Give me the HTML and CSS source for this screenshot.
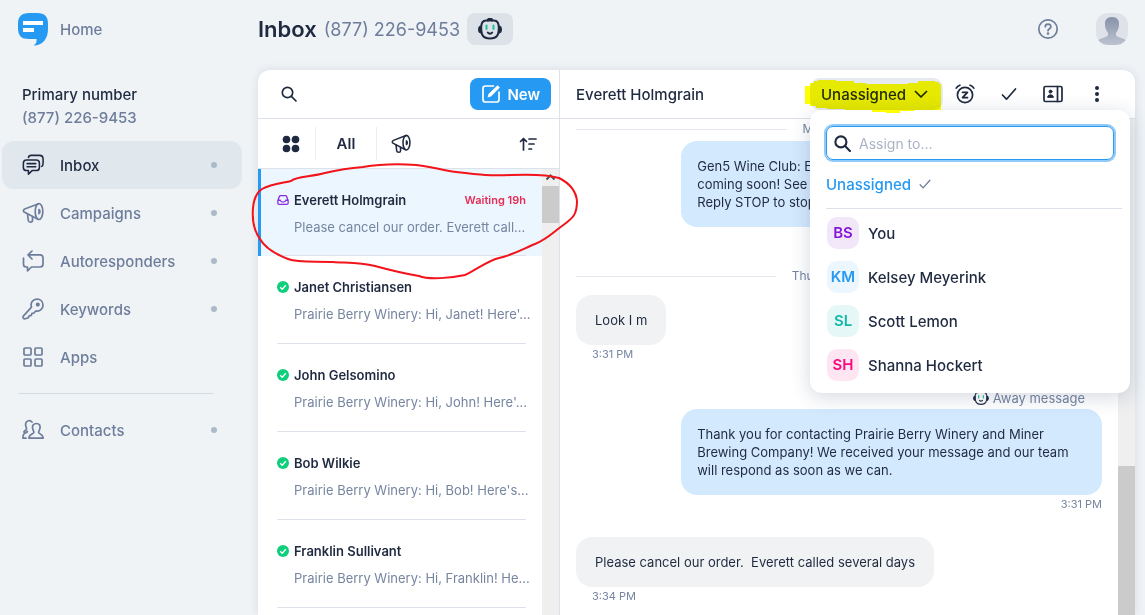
FILE: index.html
```html
<!DOCTYPE html>
<html lang="en">
<head>
  <meta charset="UTF-8">
  <meta name="viewport" content="width=device-width, initial-scale=1.0">
  <title>Inbox</title>
  <link rel="stylesheet" href="styles.css">
</head>
<body>
  <svg class="sprite" aria-hidden="true">
    <symbol id="megaphone" viewBox="0 0 22 22">
      <path d="M16.500 1.700 2.700 7C1 7.800 1 9.600 2.600 10.300L16 17.300"/>
      <ellipse cx="17" cy="9.500" rx="3.800" ry="8"/>
      <path d="M17 7.500c1.200.6 1.200 3.400 0 4z" fill="currentColor"/>
      <path d="M5.500 12l.8 6.500c.3 2.200 4.200 2.200 4.200-.2v-3.500"/>
    </symbol>
    <symbol id="robot" viewBox="0 0 24 22">
      <path d="M9.800 2.500c0-2.500 4.400-2.500 4.400 0" fill="currentColor"/>
      <path d="M8 2.500h8c3.500 0 4.800 2.200 4.800 7 0 7-1.300 11-8.800 11s-8.800-4-8.800-11c0-4.800 1.300-7 4.800-7z"/>
      <path d="M2.800 8.500c-2.400.5-2.400 5.500 0 6zM21.200 8.500c2.400.5 2.400 5.500 0 6z" fill="currentColor"/>
      <path d="M8.500 7.500v3.500M15.500 7.500v3.500" class="robot-eye"/>
      <path d="M9.800 14.500c1.200 1.600 3.200 1.600 4.400 0"/>
    </symbol>
    <symbol id="search" viewBox="0 0 16 16">
      <circle cx="6.500" cy="6.500" r="5.200"/>
      <path d="M10.400 10.400l4.600 4.600"/>
    </symbol>
    <symbol id="check" viewBox="0 0 16 16">
      <path d="M1.500 9l4 4.200L14.500 3"/>
    </symbol>
    <symbol id="done" viewBox="0 0 12 12">
      <circle cx="6" cy="6" r="6" fill="#0fce7c" stroke="none"/>
      <path d="M3.200 6.200l2 2 3.600-3.900" stroke="#fff" stroke-width="1.300"/>
    </symbol>
  </svg>

  <div class="app">
    <aside class="sidebar">
      <a href="#" class="home">
        <svg class="logo" viewBox="0 0 30 33" aria-hidden="true">
          <path d="M11 0h8c8 0 11 3.500 11 11v5c0 9-5 16.500-14.500 16.500 2.500-1.500 3.500-3.500 3-6.500H11C3.500 26 0 23 0 15v-4C0 3.500 3.500 0 11 0z" fill="#2699f2"/>
          <path d="M5 8h20v4H5zM5 15h11v4H5z" fill="#fff"/>
        </svg>
        <span>Home</span>
      </a>

      <div class="account">
        <strong>Primary number</strong>
        <span>(877) 226-9453</span>
      </div>

      <nav class="nav">
        <a href="#" class="nav-item active">
          <svg class="icon" viewBox="0 0 24 24">
            <path d="M5 6.600h10.500c2.200 0 3.500 1 3.500 3.500v4.500c0 2.500-1.300 3.500-3.500 3.500H11l-4 4v-4H5c-2.200 0-3.500-1-3.500-3.500v-4.500c0-2.500 1.300-3.500 3.500-3.500z"/>
            <path d="M7 3.800C7.300 2.300 8.300 1.500 10 1.500h9c3 0 4 1.300 4 4V10c0 2-.5 3-1.500 3.500M5.500 10.500h9.500M5.500 14h9.500"/>
          </svg>
          <span>Inbox</span><i class="dot"></i>
        </a>
        <a href="#" class="nav-item">
          <svg class="icon"><use href="#megaphone"/></svg>
          <span>Campaigns</span><i class="dot"></i>
        </a>
        <a href="#" class="nav-item">
          <svg class="icon" viewBox="0 0 22 22">
            <path d="M1.500 8v6c0 2 1 3 2.500 3h1.500v3.800l4-3.800H18c2 0 3-1 3-3V7.800c0-2-1-3-3-3H6M10 1 6 4.800 10 9"/>
          </svg>
          <span>Autoresponders</span><i class="dot"></i>
        </a>
        <a href="#" class="nav-item">
          <svg class="icon" viewBox="0 0 22 22">
            <path d="M9.500 9.200C8 4.500 11 1.200 15 1.200c3.500 0 6 2.500 6 6s-3 6.600-7.300 5.800L12 15l-2 .3-.6 2-2 .4L6 20l-3.500.8c-1.500 0-2-1.800-1-3z"/>
            <circle cx="15.800" cy="6.600" r="1.200" fill="currentColor"/>
          </svg>
          <span>Keywords</span><i class="dot"></i>
        </a>
        <a href="#" class="nav-item">
          <svg class="icon" viewBox="0 0 22 22">
            <rect x="2" y="2" width="7" height="7" rx="1"/>
            <rect x="13" y="2" width="7" height="7" rx="1"/>
            <rect x="2" y="13" width="7" height="7" rx="1"/>
            <rect x="13" y="13" width="7" height="7" rx="1"/>
          </svg>
          <span>Apps</span>
        </a>
        <hr>
        <a href="#" class="nav-item">
          <svg class="icon" viewBox="0 0 22 22">
            <path d="M14.500 4.500c-3 0-4.300 2-3.900 4.600.4 2.300 1.400 3 1.200 4.600-.2 1.300-4.800 1-4.800 5.500h14.200c0-4.500-4.400-4.200-4.600-5.500-.2-1.600 1-2.300 1.400-4.600.4-2.600-.8-4.600-3.500-4.600z"/>
            <path d="M10 3C8.600 1.200 4.200.8 3.600 5c-.3 2.300 1 3.300.9 4.800-.2 1.500-2 2-2.600 3.200M4 19.200H.9c0-2 .2-3.200 1-4.200 1.300-1.300 3-1.500 3.500-2.500"/>
          </svg>
          <span>Contacts</span><i class="dot"></i>
        </a>
      </nav>
    </aside>

    <main class="main">
      <header class="topbar">
        <h1>Inbox</h1>
        <span class="number">(877) 226-9453</span>
        <button class="bot-button" aria-label="Autoresponder">
          <svg class="icon icon-robot"><use href="#robot"/></svg>
        </button>
        <button class="help" aria-label="Help">
          <svg class="icon" viewBox="0 0 22 22">
            <circle cx="11" cy="11" r="9.200"/>
            <path d="M8.300 8.700c0-3.500 5.600-3.500 5.600 0 0 2-2.900 2-2.900 4"/>
            <circle cx="11" cy="15.600" r=".5" fill="currentColor"/>
          </svg>
        </button>
        <button class="profile" aria-label="Profile">
          <svg viewBox="0 0 32 32">
            <defs>
              <linearGradient id="person" x1="0" y1="0" x2="0" y2="1">
                <stop offset="0" stop-color="#8791a7"/>
                <stop offset="1" stop-color="#bcc4d1"/>
              </linearGradient>
            </defs>
            <path d="M16 4c5 0 7.500 3 7 8-.2 4-1.700 6-3 8-.6 2.500 1.200 3.700 3.800 4.600 2.700.9 4.800 1.600 6.200 2.900-2.200 3-5 4.500-9 4.500H11c-4 0-6.800-1.500-9-4.500 1.400-1.300 3.500-2 6.200-2.900 2.600-.9 4.400-2.100 3.800-4.600-1.300-2-2.800-4-3-8-.5-5 2-8 7-8z" fill="url(#person)"/>
          </svg>
        </button>
      </header>

      <div class="panel">
        <section class="conversations">
          <div class="list-bar">
            <button class="bare" aria-label="Search">
              <svg class="icon icon-small"><use href="#search"/></svg>
            </button>
            <button class="new-button">
              <svg class="icon icon-compose" viewBox="0 0 20 20">
                <path d="M12.500 2H4.500C2.500 2 2 2.500 2 4.500v11c0 2 .5 2.500 2.500 2.500h11c2 0 2.500-.5 2.500-2.500V8"/>
                <path d="M6.500 13.500l1-3.500L16.500 1.200l2.400 2.300L10 12.500z" fill="currentColor" stroke="none"/>
              </svg>
              New
            </button>
          </div>
          <div class="filters">
            <button class="bare filter" aria-label="All channels">
              <svg class="icon icon-dots" viewBox="0 0 18 18">
                <circle cx="4.500" cy="4.500" r="3.800"/><circle cx="13.500" cy="4.500" r="3.800"/>
                <circle cx="4.500" cy="13.500" r="3.800"/><circle cx="13.500" cy="13.500" r="3.800"/>
              </svg>
            </button>
            <button class="bare filter">All</button>
            <button class="bare filter" aria-label="Campaigns">
              <svg class="icon icon-filter"><use href="#megaphone"/></svg>
            </button>
            <button class="bare sort" aria-label="Sort">
              <svg class="icon icon-sort" viewBox="0 0 18 14">
                <path d="M4.500 13V1.500M1.500 4.500l3-3 3 3M10 2h7M10 7h5M10 12h2.500"/>
              </svg>
            </button>
          </div>
          <div class="scroller">
            <ul class="threads">
              <li class="thread selected">
                <a href="#">
                  <svg class="status" viewBox="0 0 14 12">
                    <path d="M1 6.500 2.800 2C3 1.300 3.400 1 4.200 1h5.600c.8 0 1.200.3 1.400 1L13 6.500v3c0 1-.5 1.500-1.500 1.500h-9C1.500 11 1 10.500 1 9.500zM1.200 6.300h2.600c.5 2.800 5.900 2.800 6.400 0h2.600"/>
                  </svg>
                  <strong>Everett Holmgrain</strong>
                  <em>Waiting 19h</em>
                  <p>Please cancel our order. Everett call...</p>
                </a>
              </li>
              <li class="thread">
                <a href="#">
                  <svg class="status"><use href="#done"/></svg>
                  <strong>Janet Christiansen</strong>
                  <p>Prairie Berry Winery: Hi, Janet! Here'...</p>
                </a>
              </li>
              <li class="thread">
                <a href="#">
                  <svg class="status"><use href="#done"/></svg>
                  <strong>John Gelsomino</strong>
                  <p>Prairie Berry Winery: Hi, John! Here'...</p>
                </a>
              </li>
              <li class="thread">
                <a href="#">
                  <svg class="status"><use href="#done"/></svg>
                  <strong>Bob Wilkie</strong>
                  <p>Prairie Berry Winery: Hi, Bob! Here's...</p>
                </a>
              </li>
              <li class="thread">
                <a href="#">
                  <svg class="status"><use href="#done"/></svg>
                  <strong>Franklin Sullivant</strong>
                  <p>Prairie Berry Winery: Hi, Franklin! He...</p>
                </a>
              </li>
            </ul>
            <div class="scrollbar list-scrollbar">
              <svg class="scroll-arrow" viewBox="0 0 17 17"><path d="M4.500 10.500l4-4 4 4"/></svg>
              <div class="thumb"></div>
            </div>
          </div>
        </section>

        <section class="chat">
          <div class="chat-bar">
            <h2>Everett Holmgrain</h2>
            <div class="assign">
              <button class="assign-button">
                Unassigned
                <svg class="icon icon-chevron" viewBox="0 0 14 8"><path d="M1.500 1.500 7 7l5.500-5.500"/></svg>
              </button>
              <svg class="marker" viewBox="0 0 136 33" aria-hidden="true">
                <path d="M0 6h5V3h4V1h4V0h18v1h18v2h12v1h42V3h10V1h17v1h4v2h2v26h-27v1h-14v2H81v-1H67v-2H40v-1H22v-1H11v-2H5v-2H0z"/>
              </svg>
              <div class="assign-menu">
                <label class="assign-search">
                  <svg class="icon icon-search"><use href="#search"/></svg>
                  <input type="text" placeholder="Assign to..." aria-label="Assign to">
                </label>
                <button class="bare current">
                  Unassigned
                  <svg class="icon icon-tick"><use href="#check"/></svg>
                </button>
                <ul class="people">
                  <li><button class="bare person"><span class="initials purple">BS</span>You</button></li>
                  <li><button class="bare person"><span class="initials blue">KM</span>Kelsey Meyerink</button></li>
                  <li><button class="bare person"><span class="initials teal">SL</span>Scott Lemon</button></li>
                  <li><button class="bare person"><span class="initials pink">SH</span>Shanna Hockert</button></li>
                </ul>
              </div>
            </div>
            <button class="bare action" aria-label="Snooze">
              <svg class="icon icon-action" viewBox="0 0 20 20">
                <circle cx="10" cy="11" r="7.600"/>
                <path d="M1.200 4.200C2 2.800 3.200 1.800 4.900 1.200M18.800 4.200C18 2.800 16.800 1.800 15.100 1.200M7.500 8.300h5l-5 5.400h5"/>
              </svg>
            </button>
            <button class="bare action" aria-label="Resolve">
              <svg class="icon icon-small"><use href="#check"/></svg>
            </button>
            <button class="bare action" aria-label="Contact details">
              <svg class="icon icon-action" viewBox="0 0 20 20">
                <rect x="1" y="2.500" width="18" height="15" rx="1.500"/>
                <path d="M14.500 2.500v15"/>
                <circle cx="7.500" cy="7.600" r="1.500" fill="currentColor" stroke-width="1"/>
                <path d="M4.600 13c0-3 5.800-3 5.800 0z" fill="currentColor" stroke-width="1"/>
              </svg>
            </button>
            <button class="bare action" aria-label="More">
              <svg class="icon icon-more" viewBox="0 0 4 16">
                <circle cx="2" cy="2" r="2"/><circle cx="2" cy="8" r="2"/><circle cx="2" cy="14" r="2"/>
              </svg>
            </button>
          </div>

          <div class="scroller">
            <div class="messages">
              <div class="day first-day">Mon, Aug 24</div>
              <p class="bubble sent">Gen5 Wine Club: E<br>coming soon! See<br>Reply STOP to stop</p>
              <div class="day">Thursday, Jul 23</div>
              <p class="bubble">Look I m</p>
              <time class="time">3:31 PM</time>
              <div class="away"><svg class="icon icon-away"><use href="#robot"/></svg>Away message</div>
              <p class="bubble sent">Thank you for contacting Prairie Berry Winery and Miner<br>Brewing Company! We received your message and our team<br>will respond as soon as we can.</p>
              <time class="time sent-time">3:31 PM</time>
              <p class="bubble">Please cancel our order.&nbsp; Everett called several days</p>
              <time class="time">3:34 PM</time>
            </div>
            <div class="scrollbar chat-scrollbar">
              <div class="thumb"></div>
            </div>
          </div>
        </section>

        <svg class="loop" viewBox="0 0 328 118" aria-hidden="true">
          <path d="M11 26C20 21 32 20 40 18C45 13 60 14 74 10C90 6 98 5 112 4C130 1 150 1 165 2C178 3 190 7 205 9C230 12 240 13 260 12C285 11 298 12 308 15C320 21 325 28 326 38C326 52 322 55 311 63C300 71 296 76 284 81C272 86 262 92 248 95C236 98 225 107 214 112C200 115 178 117 168 113C150 110 135 106 124 103C108 99 95 100 82 99C65 98 48 100 37 96C24 91 14 85 9 76C2 66 1 56 2 45C3 35 6 29 11 26"/>
        </svg>
      </div>
    </main>
  </div>
</body>
</html>
```
FILE: styles.css
```css
* {
  box-sizing: border-box;
}

body {
  margin: 0;
  background: #eff3f6;
  color: #1f2a40;
  font-family: Inter, "Liberation Sans", sans-serif;
  font-size: 15px;
}

h1, h2, p, ul {
  margin: 0;
  padding: 0;
}

ul {
  list-style: none;
}

a {
  color: inherit;
  text-decoration: none;
}

button {
  font: inherit;
  color: inherit;
  border: none;
  padding: 0;
  cursor: pointer;
}

.bare {
  display: flex;
  align-items: center;
  background: none;
}

.sprite {
  position: absolute;
  width: 0;
  height: 0;
}

.icon {
  flex: none;
  width: 22px;
  height: 22px;
  fill: none;
  stroke: currentColor;
  stroke-width: 1.7;
  stroke-linecap: round;
  stroke-linejoin: round;
}

.app {
  display: flex;
  height: 100vh;
  overflow: hidden;
}

/* Sidebar */
.sidebar {
  flex: none;
  width: 258px;
  padding: 12px 16px 0 2px;
  color: #6d7d9b;
  font-weight: 500;
}

.home {
  display: flex;
  align-items: center;
  gap: 12px;
  height: 34px;
  padding-left: 16px;
}

.logo {
  width: 30px;
  height: 33px;
}

.account {
  display: flex;
  flex-direction: column;
  padding: 38px 20px 12px;
  line-height: 22px;
  gap: 1px;
}

.account strong {
  color: #1f2a40;
  font-weight: 500;
}

.nav-item {
  display: flex;
  align-items: center;
  gap: 16px;
  height: 48px;
  padding: 0 25px 0 20px;
  border-radius: 12px;
}

.nav-item.active {
  background: #e0e7ed;
  color: #1f2a40;
}

.dot {
  width: 6px;
  height: 6px;
  margin-left: auto;
  border-radius: 50%;
  background: #abbac8;
}

.nav hr {
  margin: 12px 28px 12px 16px;
  border: none;
  border-top: 1px solid #d3dae1;
}

/* Main */
.main {
  display: flex;
  flex: 1;
  flex-direction: column;
  min-width: 0;
  padding-right: 10px;
}

.topbar {
  display: flex;
  flex: none;
  align-items: center;
  height: 70px;
  padding: 0 7px 12px 0;
}

.topbar h1 {
  font-size: 22px;
  font-weight: 600;
}

.number {
  margin: 0 7px;
  color: #6d7d9b;
  font-size: 18px;
}

.bot-button {
  display: flex;
  align-items: center;
  justify-content: center;
  width: 46px;
  height: 32px;
  border-radius: 8px;
  background: #dde2e9;
}

.icon-robot {
  width: 24px;
  height: 22px;
  stroke-width: 2;
}

.robot-eye {
  stroke: #20bf9a;
}

.help {
  height: 22px;
  margin-left: auto;
  background: none;
  color: #6d7d9b;
}

.profile {
  width: 32px;
  height: 32px;
  margin-left: 37px;
  border-radius: 12px;
  background: #dfe2e9;
  overflow: hidden;
}

.panel {
  position: relative;
  display: flex;
  flex: 1;
  min-height: 0;
  border-radius: 12px 12px 0 0;
  background: #fff;
  box-shadow: 0 0 8px rgba(40, 60, 100, 0.12);
}

.scroller {
  display: flex;
  flex: 1;
  min-height: 0;
}

.scrollbar {
  flex: none;
  width: 17px;
  background: #efefef;
}

.thumb {
  background: #cbcbcb;
}

/* Conversation list */
.conversations {
  display: flex;
  flex: none;
  flex-direction: column;
  width: 302px;
  border-right: 1px solid #dde1e9;
}

.list-bar {
  display: flex;
  flex: none;
  align-items: center;
  justify-content: space-between;
  height: 49px;
  padding: 0 8px 0 23px;
  border-bottom: 1px solid #dde1e9;
}

.icon-small {
  width: 16px;
  height: 16px;
}

.new-button {
  display: flex;
  align-items: center;
  gap: 6px;
  height: 32px;
  padding: 0 11px;
  border-radius: 8px;
  background: #2699f2;
  color: #fff;
  font-weight: 600;
}

.icon-compose {
  width: 20px;
  height: 20px;
}

.filters {
  display: flex;
  flex: none;
  align-items: center;
  height: 50px;
  padding: 0 22px 0 8px;
  border-bottom: 1px solid #dde1e9;
  font-weight: 600;
}

.filter {
  justify-content: center;
  width: 61px;
  height: 33px;
}

.filter:first-child {
  width: 49px;
}

.filter + .filter {
  border-left: 1px solid #eceef2;
}

.icon-dots {
  width: 18px;
  height: 18px;
  fill: currentColor;
  stroke: none;
}

.icon-filter {
  width: 20px;
  height: 20px;
  margin-right: 12px;
}

.sort {
  margin-left: auto;
}

.icon-sort {
  width: 18px;
  height: 14px;
}

.threads {
  flex: 1;
  min-width: 0;
  overflow: hidden;
}

.thread {
  height: 88px;
  padding: 0 16px 0 19px;
}

.thread.selected {
  height: 87px;
  padding-left: 16px;
  border-left: 3px solid #2699f2;
  background: #ebf6fe;
}

.thread a {
  display: grid;
  grid-template-columns: 12px 1fr auto;
  column-gap: 5px;
  grid-template-rows: 20px 18px;
  row-gap: 8px;
  align-items: center;
  height: 100%;
  padding-top: 21px;
  align-content: start;
  border-bottom: 1px solid #dde1e9;
  font-size: 13px;
}

.thread strong {
  font-weight: 600;
}

.thread em {
  color: #e72c55;
  font-size: 11px;
  font-style: normal;
  font-weight: 600;
}

.thread p {
  grid-column: 2 / 4;
  color: #7685a0;
  white-space: nowrap;
}

.status {
  width: 12px;
  height: 12px;
  fill: none;
  stroke: #8a2be2;
  stroke-width: 1.5;
  stroke-linejoin: round;
}

.list-scrollbar .thumb {
  height: 37px;
}

.scroll-arrow {
  display: block;
  width: 17px;
  height: 17px;
  fill: none;
  stroke: #505050;
  stroke-width: 2;
}

/* Chat */
.chat {
  display: flex;
  flex: 1;
  flex-direction: column;
  min-width: 0;
}

.chat-bar {
  display: flex;
  flex: none;
  align-items: center;
  height: 49px;
  padding: 0 16px;
  border-bottom: 1px solid #dde1e9;
}

.chat-bar h2 {
  font-size: 15px;
  font-weight: 500;
}

.assign {
  position: relative;
  margin-left: auto;
}

.assign-button {
  display: flex;
  align-items: center;
  justify-content: space-between;
  width: 133px;
  height: 32px;
  padding: 0 15px 0 11px;
  border-radius: 10px;
  background: #e6e9ef;
  font-weight: 500;
}

.icon-chevron {
  width: 14px;
  height: 8px;
}

.marker {
  position: absolute;
  z-index: 3;
  top: 2px;
  left: -5px;
  width: 136px;
  height: 33px;
  fill: #ffff00;
  mix-blend-mode: multiply;
  pointer-events: none;
}

.assign-menu {
  position: absolute;
  z-index: 2;
  top: 100%;
  left: 0;
  width: 320px;
  padding: 16px 8px 6px 16px;
  border-radius: 12px;
  background: #fff;
  box-shadow: 0 4px 20px rgba(40, 60, 100, 0.2);
}

.assign-search {
  display: flex;
  align-items: center;
  gap: 8px;
  height: 34px;
  margin-right: 8px;
  padding: 0 7px;
  border: 1px solid #2699f2;
  border-radius: 7px;
  box-shadow: 0 0 0 2px #8fcaf8;
}

.icon-search {
  width: 17px;
  height: 17px;
  stroke-width: 2;
}

.assign-search input {
  flex: 1;
  min-width: 0;
  padding: 0;
  border: none;
  outline: none;
  background: none;
  font: inherit;
  font-size: 14px;
}

.assign-search input::placeholder {
  color: #abb3c4;
}

.current {
  gap: 8px;
  height: 48px;
  color: #2699f2;
  font-weight: 500;
}

.icon-tick {
  width: 12px;
  height: 12px;
  color: #6d7d9b;
}

.people {
  padding-top: 2px;
  border-top: 1px solid #dde1e9;
}

.person {
  gap: 9px;
  width: 100%;
  height: 44px;
  padding-left: 1px;
  font-weight: 500;
}

.initials {
  width: 32px;
  border-radius: 10px;
  font-weight: 600;
  line-height: 32px;
  text-align: center;
}

.purple {
  background: #f1e7f8;
  color: #8517d9;
}

.blue {
  background: #ebf6fe;
  color: #2699f2;
}

.teal {
  background: #e5f8f7;
  color: #14b8a9;
}

.pink {
  background: #fde5f1;
  color: #fb087f;
}

.action {
  justify-content: center;
  width: 44px;
  height: 32px;
}

.icon-action {
  width: 20px;
  height: 20px;
}

.icon-more {
  width: 4px;
  height: 16px;
  fill: currentColor;
  stroke: none;
}

.messages {
  display: flex;
  flex: 1;
  flex-direction: column;
  align-items: flex-start;
  min-width: 0;
  padding: 0 16px;
  overflow: hidden;
  font-size: 13px;
  line-height: 18px;
}

.day {
  display: flex;
  align-items: center;
  gap: 16px;
  width: 100%;
  margin: 40px 0 10px;
  color: #7685a0;
  font-size: 12px;
}

.day::before,
.day::after {
  content: "";
  flex: 1;
  border-top: 1px solid #e3e6ec;
}

.first-day {
  margin: 1px 0 3px;
}

.bubble {
  max-width: 80%;
  padding: 16px 19px;
  border-radius: 16px;
  background: #f0f2f4;
}

.bubble.sent {
  align-self: flex-end;
  width: 80%;
  padding: 16px;
  background: #d3e9fe;
}

.time {
  margin-left: 16px;
  color: #7685a0;
  font-size: 11px;
}

.sent-time {
  align-self: flex-end;
  margin-bottom: 24px;
}

.away {
  display: flex;
  align-items: center;
  align-self: flex-end;
  gap: 4px;
  margin: 26px 17px 2px 0;
  color: #7685a0;
}

.icon-away {
  width: 16px;
  height: 16px;
  color: #1f2a40;
}

.chat-scrollbar {
  padding-top: 347px;
}

.chat-scrollbar .thumb {
  height: 100%;
}

.loop {
  position: absolute;
  z-index: 4;
  top: 93px;
  left: -7px;
  width: 328px;
  height: 118px;
  fill: none;
  stroke: #f3131b;
  stroke-width: 2;
  pointer-events: none;
}
```
